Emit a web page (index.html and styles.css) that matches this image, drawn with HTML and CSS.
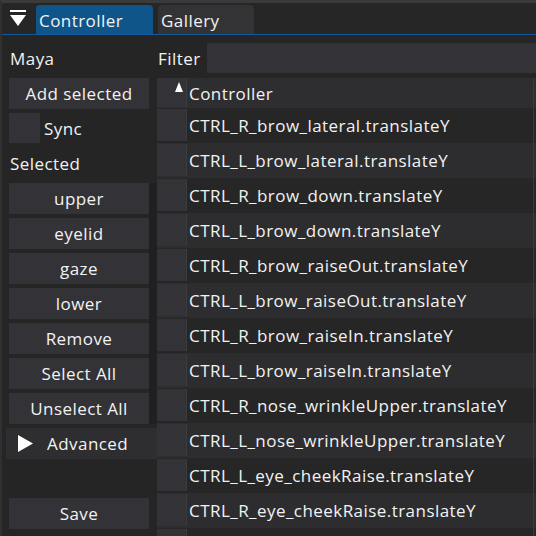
FILE: index.html
```html
<!DOCTYPE html>
<html>
<head>
<meta charset="utf-8">
<link rel="stylesheet" href="styles.css">
</head>
<body>
<div class="win">
  <div class="tabbar">
    <span class="menu-icon"><svg width="16" height="17" viewBox="0 0 16 17"><rect x="0" y="0" width="16" height="2" fill="#fff"/><polygon points="0,5 16,5 8,16" fill="#fff"/></svg></span>
    <div class="tab active">Controller</div>
    <div class="tab">Gallery</div>
  </div>
  <div class="toprow">
    <div class="maya">Maya</div>
    <div class="filter-label">Filter</div>
    <div class="filter-input"></div>
  </div>
  <div class="main">
    <div class="side">
      <div class="btn">Add selected</div>
      <div class="check-row"><span class="checkbox"></span><span>Sync</span></div>
      <div class="label-row">Selected</div>
      <div class="list">
        <div class="btn">upper</div>
        <div class="btn">eyelid</div>
        <div class="btn">gaze</div>
        <div class="btn">lower</div>
        <div class="btn">Remove</div>
        <div class="btn">Select All</div>
        <div class="btn">Unselect All</div>
      </div>
      <div class="collapse-hdr"><svg width="15" height="17" viewBox="0 0 15 17"><polygon points="0,0 15,8.5 0,17" fill="#fff"/></svg><span>Advanced</span></div>
      <div class="spacer"></div>
      <div class="btn">Save</div>
    </div>
    <div class="table">
      <div class="row hdr">
        <div class="c1"><svg width="8" height="10" viewBox="0 0 8 10"><polygon points="4,0 8,10 0,10" fill="#fff"/></svg></div>
        <div class="c2">Controller</div>
        <div class="c3">F</div>
      </div>
      <div class="row"><div class="c1"></div><div class="c2">CTRL_R_brow_lateral.translateY</div><div class="c3"></div></div>
      <div class="row alt"><div class="c1"></div><div class="c2">CTRL_L_brow_lateral.translateY</div><div class="c3"></div></div>
      <div class="row"><div class="c1"></div><div class="c2">CTRL_R_brow_down.translateY</div><div class="c3"></div></div>
      <div class="row alt"><div class="c1"></div><div class="c2">CTRL_L_brow_down.translateY</div><div class="c3"></div></div>
      <div class="row"><div class="c1"></div><div class="c2">CTRL_R_brow_raiseOut.translateY</div><div class="c3"></div></div>
      <div class="row alt"><div class="c1"></div><div class="c2">CTRL_L_brow_raiseOut.translateY</div><div class="c3"></div></div>
      <div class="row"><div class="c1"></div><div class="c2">CTRL_R_brow_raiseIn.translateY</div><div class="c3"></div></div>
      <div class="row alt"><div class="c1"></div><div class="c2">CTRL_L_brow_raiseIn.translateY</div><div class="c3"></div></div>
      <div class="row"><div class="c1"></div><div class="c2">CTRL_R_nose_wrinkleUpper.translateY</div><div class="c3"></div></div>
      <div class="row alt"><div class="c1"></div><div class="c2">CTRL_L_nose_wrinkleUpper.translateY</div><div class="c3"></div></div>
      <div class="row"><div class="c1"></div><div class="c2">CTRL_L_eye_cheekRaise.translateY</div><div class="c3"></div></div>
      <div class="row alt"><div class="c1"></div><div class="c2">CTRL_R_eye_cheekRaise.translateY</div><div class="c3"></div></div>
      <div class="row"><div class="c1"></div><div class="c2"></div><div class="c3"></div></div>
    </div>
  </div>
</div>
</body>
</html>
```

FILE: styles.css
```css
html, body {
  margin: 0;
  padding: 0;
  background: #252525;
  overflow: hidden;
}
.win {
  width: 536px;
  height: 536px;
  box-sizing: border-box;
  border-top: 3px solid #3a3a3a;
  border-left: 2px solid #303030;
  background: #252525;
  color: #f2f2f2;
  font-family: "Open Sans", "Noto Sans", sans-serif;
  font-size: 17px;
  letter-spacing: 0.45px;
  overflow: hidden;
  display: flex;
  flex-direction: column;
}
.tabbar {
  height: 32px;
  box-sizing: border-box;
  display: flex;
  align-items: flex-end;
  gap: 5px;
  padding-left: 8px;
  border-bottom: 1px solid #11599a;
  background: #262626;
  flex: none;
}
.menu-icon {
  display: flex;
  align-self: flex-start;
  padding-top: 7px;
  width: 16px;
  margin-right: 5px;
}
.tab {
  height: 29px;
  box-sizing: border-box;
  padding-left: 3px;
  padding-top: 1px;
  display: flex;
  align-items: center;
  border-radius: 4px 4px 0 0;
  background: #333336;
  width: 96px;
  white-space: nowrap;
}
.tab.active {
  background: #0f558a;
  width: 117px;
}
.toprow {
  height: 30px;
  margin-top: 8px;
  display: flex;
  align-items: center;
  flex: none;
}
.maya {
  width: 156px;
  padding-left: 8px;
  box-sizing: border-box;
}
.filter-label {
  width: 49px;
}
.filter-input {
  flex: 1;
  height: 30px;
  background: #333337;
}
.main {
  margin-top: 5px;
  flex: 1;
  display: flex;
  min-height: 0;
}
.side {
  width: 155px;
  flex: none;
  display: flex;
  flex-direction: column;
  gap: 4px;
  padding-left: 7px;
  box-sizing: border-box;
}
.btn {
  width: 140px;
  height: 31px;
  flex: none;
  background: #333337;
  display: flex;
  align-items: center;
  justify-content: center;
  white-space: nowrap;
}
.check-row {
  height: 30px;
  display: flex;
  align-items: center;
  gap: 4px;
  flex: none;
}
.checkbox {
  width: 31px;
  height: 30px;
  background: #333337;
}
.label-row {
  height: 32px;
  display: flex;
  align-items: center;
  padding-left: 1px;
  flex: none;
}
.list {
  display: flex;
  flex-direction: column;
  gap: 4px;
  flex: none;
  margin-right: -6px;
  padding-right: 6px;
  background: linear-gradient(to right, transparent 140px, #202020 140px);
}
.collapse-hdr {
  height: 31px;
  flex: none;
  margin-left: -3px;
  background: #2e2e30;
  display: flex;
  align-items: center;
  padding-left: 12px;
  gap: 14px;
}
.spacer {
  height: 31px;
  flex: none;
}
.table {
  flex: 1;
  display: flex;
  flex-direction: column;
  min-width: 0;
  background: #252525;
}
.row {
  height: 35px;
  flex: none;
  display: flex;
  background: #262626;
}
.row.alt {
  background: #2d2d2f;
}
.row.hdr {
  height: 30px;
  background: #2e2e31;
}
.c1 {
  width: 30px;
  flex: none;
  background: #333337;
  border-right: 1px solid #3c3c3e;
  margin-top: 1px;
  margin-bottom: 2px;
  display: flex;
  justify-content: flex-end;
  align-items: flex-start;
  padding-right: 3px;
  padding-top: 4px;
  box-sizing: border-box;
}
.hdr .c1 {
  margin-top: 0;
  margin-bottom: 1px;
}
.c2 {
  width: 344px;
  flex: none;
  padding-left: 2px;
  display: flex;
  align-items: center;
  white-space: nowrap;
  overflow: hidden;
}
.c3 {
  flex: 1;
  border-left: 1px solid #3a3a3c;
  padding-left: 1px;
  display: flex;
  align-items: center;
  overflow: hidden;
}
```
